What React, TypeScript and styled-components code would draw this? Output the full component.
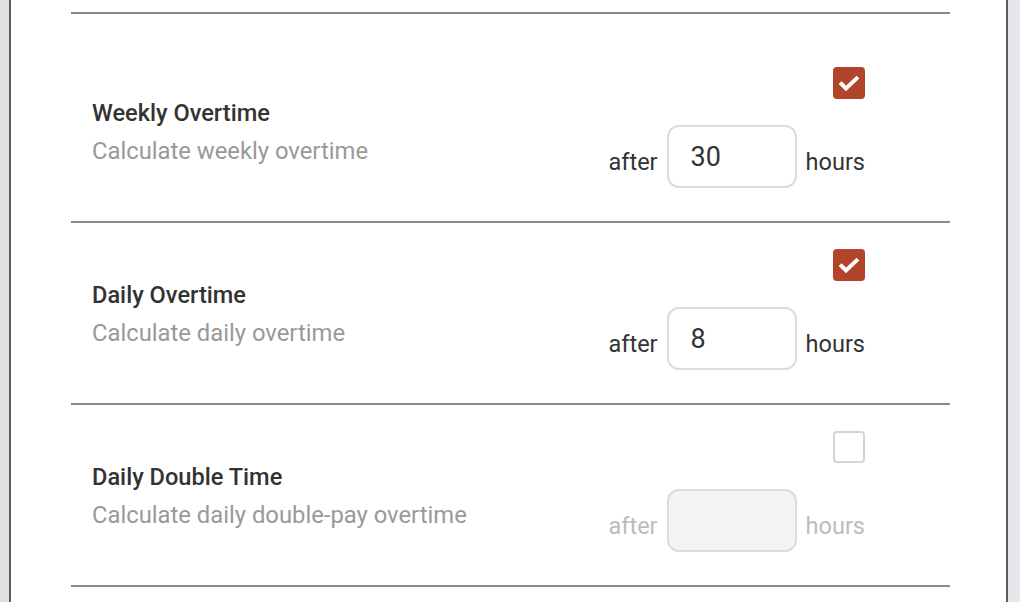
import React, { useState } from "react";
import styled, { createGlobalStyle } from "styled-components";

const GlobalStyle = createGlobalStyle`
  html, body {
    margin: 0;
    padding: 0;
    background: #e4e5e9;
    font-family: Roboto, "Liberation Sans", Arial, sans-serif;
  }
`;

export const Page = styled.div`
  display: flex;
  min-height: 602px;
  padding: 0 12px 0 9px;
  background: linear-gradient(90deg, #dfe0e4 0%, #e6e7eb 100%);
  box-sizing: border-box;
  overflow: hidden;
`;

export const Panel = styled.div`
  flex: 1;
  background: #fff;
  border-left: 2px solid #5c5c5c;
  border-right: 2px solid #5c5c5c;
  padding: 12px 56px 40px 60px;
`;

export const Section = styled.div<{ first?: number }>`
  display: flex;
  align-items: center;
  justify-content: space-between;
  border-top: 2px solid #8a8a8a;
  padding: ${(props) => (props.first ? "53px" : "26px")} 85px 33px 21px;
  &:last-child {
    border-bottom: 2px solid #8a8a8a;
  }
`;

export const Info = styled.div`
  display: flex;
  flex-direction: column;
  gap: 12px;
  padding-top: 8px;
`;

export const Title = styled.div`
  font-size: 23.6px;
  font-weight: 500;
  color: #333;
  line-height: 26px;
`;

export const Subtitle = styled.div`
  font-size: 23.8px;
  color: #999;
  line-height: 26px;
`;

export const Controls = styled.div`
  display: flex;
  flex-direction: column;
  align-items: flex-end;
  gap: 26px;
`;

export const Check = styled.button<{ checked: number }>`
  width: 32px;
  height: 32px;
  padding: 0;
  margin: 0;
  border-radius: 4px;
  border: ${(props) => (props.checked ? "none" : "2px solid #d4d4d4")};
  background: ${(props) => (props.checked ? "#b1442b" : "#fff")};
  display: flex;
  align-items: center;
  justify-content: center;
  cursor: pointer;
  box-sizing: border-box;
`;

export const InputRow = styled.div`
  display: flex;
  align-items: center;
  gap: 9px;
`;

export const Label = styled.span<{ disabled: number }>`
  font-size: 23.5px;
  line-height: 26px;
  margin-top: 11px;
  color: ${(props) => (props.disabled ? "#bcbcbc" : "#333")};
`;

export const HoursInput = styled.input`
  width: 130px;
  height: 63px;
  box-sizing: border-box;
  border: 2px solid #dcdcdc;
  border-radius: 12px;
  padding: 0 0 0 22px;
  font-family: Roboto, "Liberation Sans", Arial, sans-serif;
  font-size: 27px;
  color: #333;
  background: #fff;
  outline: none;
  &:disabled {
    background: #f4f4f4;
  }
`;

const CheckMark = () => (
  <svg width="32" height="32" viewBox="0 0 32 32">
    <path
      d="M8.5 17 L13 21.5 L23.5 11.5"
      fill="none"
      stroke="#fff"
      strokeWidth="4"
      strokeLinecap="square"
    />
  </svg>
);

type Rule = {
  title: string;
  desc: string;
  enabled: boolean;
  hours: string;
};

const initial: Rule[] = [
  { title: "Weekly Overtime", desc: "Calculate weekly overtime", enabled: true, hours: "30" },
  { title: "Daily Overtime", desc: "Calculate daily overtime", enabled: true, hours: "8" },
  { title: "Daily Double Time", desc: "Calculate daily double-pay overtime", enabled: false, hours: "" },
];

const App = () => {
  const [rules, setRules] = useState<Rule[]>(initial);

  const update = (i: number, patch: Partial<Rule>) => {
    setRules((r) => r.map((x, idx) => (idx === i ? { ...x, ...patch } : x)));
  };

  return (
    <>
      <GlobalStyle />
      <Page>
        <Panel>
          {rules.map((rule, i) => (
            <Section key={rule.title} first={i === 0 ? 1 : 0}>
              <Info>
                <Title>{rule.title}</Title>
                <Subtitle>{rule.desc}</Subtitle>
              </Info>
              <Controls>
                <Check
                  checked={rule.enabled ? 1 : 0}
                  onClick={() => update(i, { enabled: !rule.enabled })}
                >
                  {rule.enabled && <CheckMark />}
                </Check>
                <InputRow>
                  <Label disabled={rule.enabled ? 0 : 1}>after</Label>
                  <HoursInput
                    value={rule.hours}
                    disabled={!rule.enabled}
                    onChange={(e) => update(i, { hours: e.target.value })}
                  />
                  <Label disabled={rule.enabled ? 0 : 1}>hours</Label>
                </InputRow>
              </Controls>
            </Section>
          ))}
        </Panel>
      </Page>
    </>
  );
};

export default App;
